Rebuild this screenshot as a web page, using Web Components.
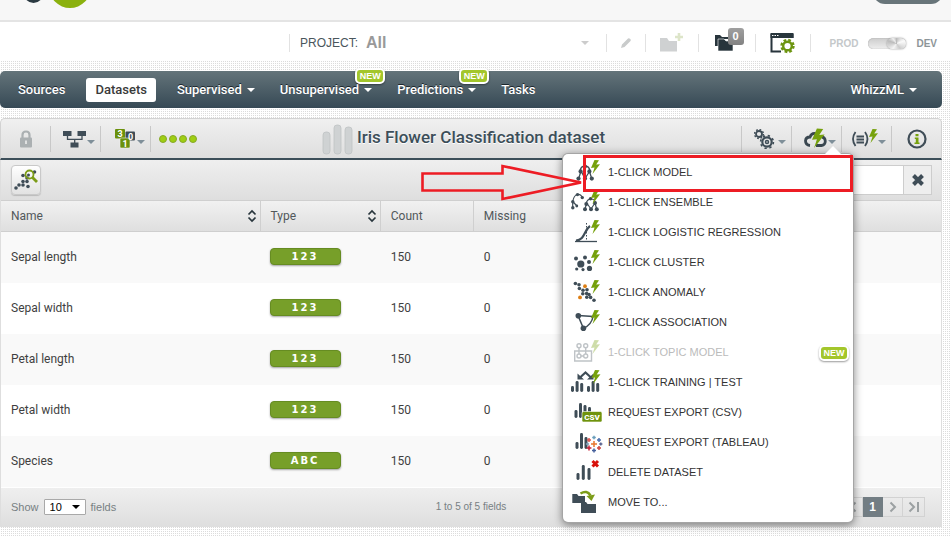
<!DOCTYPE html>
<html lang="en">
<head>
<meta charset="utf-8">
<title>Iris Flower Classification dataset</title>
<style>
body { margin: 0; background: #fff; color: #3c4648; font-family: Roboto, "Liberation Sans", sans-serif; font-size: 12px; }
</style>
</head>
<body>
<dataset-page></dataset-page>
<script>
const define = (name, html, setup) => {
  const template = document.createElement('template');
  template.innerHTML = html;
  customElements.define(name, class extends HTMLElement {
    constructor() {
      super();
      this.attachShadow({ mode: 'open' }).append(template.content.cloneNode(true));
    }
    connectedCallback() { if (setup) setup(this, this.shadowRoot); }
  });
};

const bolt = (x, y, s = 1) => `<path transform="translate(${x} ${y}) scale(${s})" fill="#76a10c" d="M3.5 0L8 .3 5.2 4.6 9 4.3 1.5 14 3.5 7.6 0 8z"/>`;
const dots = (list, r, fill = '#3f4d57') => list.map(([x, y, q]) => `<circle cx="${x}" cy="${y}" r="${q || r}" fill="${fill}"/>`).join('');
const bars = (list, fill = '#3f4d57') => list.map(([x, y, h]) => `<rect x="${x}" y="${y}" width="3" height="${h}" rx="1.4" fill="${fill}"/>`).join('');
const plus = (x, y, c, s = 2) => `<path d="M${x - s} ${y}h${2 * s}M${x} ${y - s}v${2 * s}" stroke="${c}" stroke-width="1.5"/>`;

/* name: [width, height, markup] */
const ICONS = {
  model: [30, 26, `<path d="M9 12.500Q9.500 7 14 7T19 12.500M10 12L7.700 19.500M10 12L14 19.500M18.500 12.500L14 19.500M18.500 12.500L20.700 19.500" fill="none" stroke="#3f4d57" stroke-width="1.300"/>${dots([[14, 7.5, 2], [9.6, 12.4], [18.4, 12.4], [7.5, 19.6], [14, 19.6], [20.8, 19.6]], 2.1)}${bolt(20, 1)}`],
  ensemble: [30, 26, `<path d="M1.700 18.700V12.500Q3 6 6.500 5.500T11.500 9M1.700 12.500L6 17M15 15Q16 10 20 10T24.500 14M15.500 14.500L14 20M16 14.500L20 20M24 14L20 20M24 14L25.700 20" fill="none" stroke="#3f4d57" stroke-width="1.200"/>${dots([[1.8, 12.7], [1.8, 18.7], [5.8, 17, 1.4], [6.5, 5.6], [11.3, 8.6], [15.3, 15, 2], [24, 14, 2], [14, 20.2, 2], [20, 20.2, 2], [25.8, 20.2, 2], [19.5, 9.8]], 1.7)}${bolt(20, 1)}`],
  logistic: [30, 26, `<path d="M4 22.500H26" stroke="#3f4d57" stroke-width="1.300"/><path d="M15.500 4V22" stroke="#3f4d57" stroke-dasharray="1.500 1.500"/><path d="M5 21.500C14 21 13 11 19 7" fill="none" stroke="#3f4d57" stroke-width="2.200"/>${bolt(20, 1)}`],
  cluster: [30, 26, `${dots([[5, 9.5], [9.8, 15, 3.6], [14, 8.6], [18, 13, 2], [5.7, 20, 1.6], [12, 20.6, 1.6], [18.5, 19.4, 2.6]], 2)}${bolt(20, 1)}`],
  anomaly: [30, 26, `${dots([[4.4, 4.5], [8, 5.8], [8.4, 9.5], [12, 11.3], [11.8, 14.8], [15.6, 14.6], [16, 10.8], [15.8, 18.2], [19.6, 18.4], [23, 21.2], [18, 15.5]], 1.8)}${dots([[14, 7.2], [9, 18.4]], 1.9, '#dd7d12')}${bolt(20, 1)}`],
  association: [30, 26, `<path d="M7 6.500L22 7.500Q21 15 12.500 19.500Z" fill="none" stroke="#3f4d57" stroke-width="1.500"/>${dots([[7.3, 6.8], [12.4, 19.2]], 2.8)}${bolt(20, 1)}`],
  topic: [30, 26, `<g opacity=".33" fill="none" stroke="#3f4d57" stroke-width="1.400"><path d="M3.700 12H20.500V22H3.700ZM8 9V15M14.700 9V15M10 17H13"/><circle cx="8" cy="6.800" r="2"/><circle cx="14.700" cy="6.800" r="2"/><circle cx="8" cy="17" r="2"/><circle cx="14.700" cy="17" r="2"/></g><g opacity=".35">${bolt(20, 1)}</g>`],
  training: [30, 26, `${bars([[0, 17, 6], [4.6, 12, 11], [9.2, 14, 9], [16, 17, 6], [20.6, 12, 11], [25.2, 14, 9]])}<path d="M9 8.500L14.500 3.500L20 8.500" fill="none" stroke="#3f4d57" stroke-width="2.200"/><path d="M6.500 4.500V10.500H13ZM22.500 4.500V10.500H16Z" fill="#3f4d57"/>${bolt(20.5, 1)}`],
  csv: [32, 26, `${bars([[3.5, 11, 8], [8, 4, 15], [12.5, 6, 12], [17, 8, 8]])}<rect x="11" y="12.500" width="20" height="10.500" rx="1.500" fill="#6f930d" stroke="#fff" stroke-width=".600"/><text x="21" y="20.800" text-anchor="middle" font-family="Roboto" font-weight="900" font-size="8" fill="#fff">CSV</text>`],
  tableau: [32, 26, `${bars([[4.5, 13, 7], [9, 4, 16], [13.5, 8, 12]])}${plus(23, 15, '#e8762c', 3)}${plus(18, 11, '#d9534f')}${plus(28, 11, '#4b6fae')}${plus(18, 19, '#c72037', 2.4)}${plus(28, 19, '#d0443d')}${plus(23, 8.5, '#6a9dbb', 1.8)}${plus(23, 21.5, '#46609c', 2)}${plus(16.5, 15, '#82a0b8', 1.6)}${plus(29.8, 15, '#5b6591', 1.6)}`],
  trash: [30, 26, `${bars([[5.5, 14, 7], [10.8, 6, 15], [16.5, 9, 12]])}<path d="M21.500 2L27 7.500M27 2L21.500 7.500" stroke="#d8110b" stroke-width="3"/>`],
  move: [30, 26, `<path d="M1.300 5H6L7.500 7H14V14H1.300ZM10 13H15L16.500 15H25V24H10Z" fill="#3f4d57"/><path d="M9.500 4.500Q16 .500 19.500 6.500" fill="none" stroke="#7c9c18" stroke-width="2.500"/><path d="M15.500 7L24 5.500 20.500 12Z" fill="#7c9c18"/>`],
  pencil: [12, 12, `<path d="M1 11L2 7.500 8 1.500Q9 .800 10.300 2 11.300 3.200 10.500 4L4.500 10Z" fill="#c9cbcb"/>`],
  folderadd: [24, 20, `<path d="M0 5H7L9 8H17V18.500H0Z" fill="#cfd1d2"/><path d="M19 0V8M15 4H23" stroke="#dde5c9" stroke-width="2.600"/>`],
  folders: [20, 18, `<path d="M0 1H5L7 3H14V5H3V12H0Z" fill="#28353c"/><path d="M3 5H9L11 7H18V17H3Z" fill="#28353c" stroke="#fff" stroke-width=".600"/>`],
  windowgear: [26, 22, `<path d="M1.500 2V19.500H11M22.500 6V2" fill="none" stroke="#28353c" stroke-width="2"/><path d="M.500 1H23.500V6H.500Z" fill="#28353c"/><path d="M2 3.500H9" stroke="#fff" stroke-dasharray="1.500 1"/><circle cx="17.500" cy="14" r="5.800" fill="none" stroke="#6d9511" stroke-width="2.800" stroke-dasharray="2.600 1.960"/><circle cx="17.500" cy="14" r="4.300" fill="#fff" stroke="#6d9511" stroke-width="2.400"/>`],
  lock: [14, 18, `<path d="M3.500 8V5Q3.500 1.500 7 1.500T10.500 5V8" fill="none" stroke="#abb0b2" stroke-width="2.200"/><rect x="1" y="7.500" width="12" height="10" rx="1" fill="#abb0b2"/><path d="M7 10.500V14" stroke="#eee" stroke-width="1.600"/>`],
  tree: [24, 18, `<path d="M0 1H8.500V6H0ZM14.500 1H23V6H14.500ZM7.500 12.500H15.500V17.500H7.500Z" fill="#3f4d57"/><path d="M4.500 6V9.300H19V6M11.700 9V13" fill="none" stroke="#3f4d57" stroke-width="1.300"/>`],
  numbers: [22, 20, `<rect x="0" width="10" height="9.500" rx="1" fill="#6b910c"/><rect x="10.500" y="2.500" width="9.500" height="9" rx="1" fill="#3f4d57"/><rect x="5" y="9" width="10" height="10" rx="1" fill="#6b910c" stroke="#eee" stroke-width=".600"/><g font-family="Roboto" font-weight="700" font-size="9" fill="#fff" text-anchor="middle"><text x="5" y="8">3</text><text x="15.500" y="10.500">0</text><text x="10" y="17.500">1</text></g>`],
  titlebars: [32, 32, `<g fill="#cfd2d3" stroke="#bfc3c4" stroke-width=".800"><rect x="1" y="9" width="7" height="22" rx="3"/><rect x="12" y="2" width="7" height="29" rx="3"/><rect x="23" y="4" width="7" height="27" rx="3"/></g>`],
  gears: [24, 20, `<g fill="none" stroke="#3f4d57"><circle cx="5" cy="5" r="3" stroke-width="1.800"/><circle cx="5" cy="5" r="4.400" stroke-width="1.500" stroke-dasharray="1.700 1.750"/><circle cx="13" cy="13" r="4.700" stroke-width="2.200"/><circle cx="13" cy="13" r="6.400" stroke-width="1.600" stroke-dasharray="2.300 2.720"/><circle cx="13" cy="13" r="1.500" stroke-width="1.500"/></g>`],
  cloud: [24, 22, `<path d="M6 17.500Q1.500 17 1.500 12.800 1.800 9 6 9 7.500 4.500 12 5.500M12 17.500H17.500Q21.300 17 21.300 13 21 9.500 18 9" fill="none" stroke="#3a4750" stroke-width="2.800"/>${bolt(8, .5, 1.4)}`],
  script: [27, 22, `<g fill="none" stroke="#3f4d57" stroke-width="1.800"><path d="M4.500 4Q-.500 11 4.500 18M14 4Q19 11 14 18M5.500 8.500H13M5.500 11.500H13M5.500 14.500H13"/></g>${bolt(18, 1)}`],
  info: [22, 22, `<circle cx="11" cy="11" r="8.500" fill="none" stroke="#3f4d57" stroke-width="2.200"/><path d="M9.500 6H12.500V8.200H9.500ZM8.800 9.500H12.500V14.500H13.500V16H8.500V14.500H9.800V11H8.800Z" fill="#76a10c"/>`],
  scatter: [26, 24, `${dots([[3, 20], [6, 17], [10, 17], [10, 13.5], [14, 13.5], [15, 18.5], [10, 7.5], [21.5, 4], [14, 10], [15.5, 7, 1.5]], 1.8)}<circle cx="16.500" cy="6.500" r="4" fill="none" stroke="#7c9c18" stroke-width="1.800"/><path d="M19.500 9.500L24 14" stroke="#7c9c18" stroke-width="2.800"/>`],
  sort: [10, 14, `<path d="M1.500 5.500L5 2 8.500 5.500M1.500 8.500L5 12 8.500 8.500" fill="none" stroke="#28353c" stroke-width="1.700"/>`],
  cross: [12, 12, `<path d="M1.500 1.500L10.500 10.500M10.500 1.500L1.500 10.500" stroke="#3f4d57" stroke-width="4"/>`],
  prev: [8, 12, `<path d="M6.500 1.500L2 6 6.500 10.500" fill="none" stroke="#9ba0a2" stroke-width="2"/>`],
  first: [12, 12, `<path d="M10 1.500L5.500 6 10 10.500M1.500 1V11" fill="none" stroke="#9ba0a2" stroke-width="2"/>`],
  next: [8, 12, `<path d="M1.500 1.500L6 6 1.500 10.500" fill="none" stroke="#9ba0a2" stroke-width="2"/>`],
  last: [12, 12, `<path d="M1.500 1.500L6 6 1.500 10.500M10 1V11" fill="none" stroke="#9ba0a2" stroke-width="2"/>`],
};

define('ui-icon', `<style>:host{display:inline-flex;flex:none}svg{display:block}</style><span></span>`, (el, root) => {
  const [w, h, body] = ICONS[el.getAttribute('name')];
  root.querySelector('span').innerHTML = `<svg width="${w}" height="${h}" viewBox="0 0 ${w} ${h}" aria-hidden="true">${body}</svg>`;
});

define('drop-caret', `<style>:host{display:inline-block;flex:none;border:4px solid transparent;border-top:4px solid currentColor;border-bottom:0}</style>`);

define('new-badge', `<style>
:host{display:inline-block;box-sizing:border-box;width:30px;height:16px;border:2px solid #fff;border-radius:5px;background:#a3c62b;color:#fff;
font:bold 9px/12px "Liberation Sans",sans-serif;text-align:center;box-shadow:0 1px 2px rgba(0,0,0,.4)}</style>NEW`);

define('top-strip', `<style>
:host{display:flex;justify-content:space-between;height:20px;background:#f7f7f7;border-bottom:2px solid #e4e4e4;overflow:hidden}
svg{display:block;margin-left:20px}
button{width:70px;height:24px;margin:-20px 8px 0 0;border:0;border-radius:12px;background:#68757a}
</style>
<svg width="80" height="20" viewBox="0 0 80 20" aria-hidden="true"><circle cx="13.500" cy="-7" r="10" fill="#2b3a42"/><circle cx="50" cy="-13" r="21" fill="#8bb10e"/></svg>
<button aria-label="Account"></button>`);

define('bar-cell', `<style>:host{display:flex;align-items:center;justify-content:center;position:relative;height:18px;border-left:1px solid #e2e2e2;box-sizing:border-box}</style><slot></slot>`);

define('project-bar', `<style>
:host{display:flex;align-items:center;height:39px;padding-top:3px;padding-left:289px;box-sizing:border-box;background:#fff;font-family:"Liberation Sans",sans-serif}
button{border:0;background:none;padding:0;color:inherit;font:inherit;display:flex;align-items:center}
.project{flex:1;justify-content:stretch}
.project button{flex:1;padding:0 17px 0 10px;font-size:12px;color:#4a565c}
.project b{font-size:16px;color:#999;margin-left:8px}
.project drop-caret{margin-left:auto;color:#ccc}
.a{width:39px}.b{width:53px}.c{width:57px}.d{width:55px}
.mode{flex:none;padding:0 14px 0 19px;font-size:10px;font-weight:bold;color:#c4c8ca;gap:10px}
.mode span{color:#8d9598}
input{appearance:none;margin:0;width:38px;height:11px;border-radius:6px;background:linear-gradient(#ccc,#eee);position:relative;box-shadow:inset 0 0 1px #888}
input::after{content:"";position:absolute;right:0;top:0;width:19px;height:11px;border-radius:6px;background:conic-gradient(#bbb,#fafafa 20%,#ccc 40%,#f5f5f5 60%,#bbb 80%,#eee,#bbb);box-shadow:0 0 2px #888}
.count{position:absolute;left:29px;top:-6px;width:16px;height:17px;border-radius:3px;background:linear-gradient(#a0a0a0,#828282);color:#fff;font:bold 11px/17px "Liberation Sans",sans-serif;text-align:center}
.c button{margin-right:4px}
</style>
<bar-cell class="project"><button>PROJECT: <b>All</b><drop-caret></drop-caret></button></bar-cell>
<bar-cell class="a"><button aria-label="Edit project"><ui-icon name="pencil"></ui-icon></button></bar-cell>
<bar-cell class="b"><button aria-label="New project"><ui-icon name="folderadd"></ui-icon></button></bar-cell>
<bar-cell class="c"><button aria-label="Projects"><ui-icon name="folders"></ui-icon></button><span class="count">0</span></bar-cell>
<bar-cell class="d"><button aria-label="Settings"><ui-icon name="windowgear"></ui-icon></button></bar-cell>
<bar-cell class="mode">PROD<input type="checkbox" checked aria-label="Development mode"><span>DEV</span></bar-cell>`);

define('nav-item', `<style>
:host{display:flex;position:relative;align-items:center;align-self:stretch}
a{display:flex;align-items:center;gap:5px;padding:0 8px;height:24px;border-radius:3px;color:#fff;text-decoration:none;font:500 13px/24px Roboto,sans-serif;text-shadow:0 -1px 0 #1b262c}
:host([active]) a{padding:0 9px;background:#fff;color:#3a3a3a;text-shadow:none}
:host([menu]) a{padding-right:4px}
drop-caret{display:none}:host([menu]) drop-caret{display:block}
new-badge{display:none;position:absolute;right:-9px;top:-3px}:host([fresh]) new-badge{display:block}
</style><a href="#"><slot></slot><drop-caret></drop-caret></a><new-badge></new-badge>`);

define('main-nav', `<style>
nav{display:flex;gap:13px;height:37px;padding:0 21px 0 10px;border-radius:5px;background:linear-gradient(#64747a,#364955)}
.end{margin-left:auto}
</style><nav><nav-item>Sources</nav-item><nav-item active>Datasets</nav-item><nav-item menu>Supervised</nav-item><nav-item menu fresh>Unsupervised</nav-item><nav-item menu fresh>Predictions</nav-item><nav-item>Tasks</nav-item><nav-item class="end" menu>WhizzML</nav-item></nav>`);

define('tool-item', `<style>
:host{display:flex;position:relative;width:50px;height:26px;box-sizing:border-box;align-items:center;justify-content:center}
:host([menu]){justify-content:flex-end;padding-right:5px}
button{display:flex;align-items:center;border:0;padding:0;background:none}
drop-caret{display:none;color:#7f8f99;margin:7px 0 0 0}
:host([menu]) drop-caret{display:block}
</style><button><span></span><drop-caret></drop-caret></button><slot></slot>`, (el, root) => {
  const icon = document.createElement('ui-icon');
  icon.setAttribute('name', el.getAttribute('icon'));
  root.querySelector('span').replaceWith(icon);
  root.querySelector('button').setAttribute('aria-label', el.getAttribute('label'));
});

define('menu-item', `<style>
:host{display:block}
button{display:flex;align-items:center;width:100%;height:30px;border:0;padding:0 4px 0 8px;background:none;color:#333;font:11px/30px "Liberation Sans",sans-serif;text-align:left}
:host([off]) button{color:#bbb}
.icon{display:flex;width:32px;margin-right:5px}
slot[name=end]{display:block;margin-left:auto}
span.label{flex:1}
</style><button><span class="icon"></span><span class="label"><slot></slot></span><slot name="end"></slot></button>`, (el, root) => {
  const icon = document.createElement('ui-icon');
  icon.setAttribute('name', el.getAttribute('icon'));
  root.querySelector('.icon').append(icon);
  root.querySelector('button').disabled = el.hasAttribute('off');
});

define('action-menu', `<style>
:host{display:block;position:absolute;z-index:5;right:-12px;top:28px;width:290px;padding:3px 0 5px;box-sizing:border-box;background:#fff;border-radius:5px;box-shadow:0 0 0 1px #a5a5a5,0 2px 8px 1px rgba(0,0,0,.45)}
:host::before{content:"";position:absolute;right:12px;top:-8px;border:8px solid transparent;border-top:0;border-bottom-color:#fff}
.box{position:absolute;left:20px;right:0;top:1px;height:37px;box-sizing:border-box;border:3px solid #ed1c24;pointer-events:none}
.arrow{position:absolute;left:-143px;top:9px;pointer-events:none}
</style>
<menu-item icon="model">1-CLICK MODEL</menu-item>
<menu-item icon="ensemble">1-CLICK ENSEMBLE</menu-item>
<menu-item icon="logistic">1-CLICK LOGISTIC REGRESSION</menu-item>
<menu-item icon="cluster">1-CLICK CLUSTER</menu-item>
<menu-item icon="anomaly">1-CLICK ANOMALY</menu-item>
<menu-item icon="association">1-CLICK ASSOCIATION</menu-item>
<menu-item icon="topic" off>1-CLICK TOPIC MODEL<new-badge slot="end"></new-badge></menu-item>
<menu-item icon="training">1-CLICK TRAINING | TEST</menu-item>
<menu-item icon="csv">REQUEST EXPORT (CSV)</menu-item>
<menu-item icon="tableau">REQUEST EXPORT (TABLEAU)</menu-item>
<menu-item icon="trash">DELETE DATASET</menu-item>
<menu-item icon="move">MOVE TO...</menu-item>
<div class="box"></div>
<svg class="arrow" width="170" height="40" viewBox="0 0 170 40" aria-hidden="true"><path d="M2.500 10.500H82.500V3L161 19.500 82.500 36V27.500H2.500Z" fill="none" stroke="#ed1c24" stroke-width="2.600"/></svg>`);

define('dataset-toolbar', `<style>
:host{display:grid;grid-template-columns:1fr auto 1fr;align-items:center;height:42px;box-sizing:border-box;border:1px solid #d2d2d2;border-bottom:2px solid #3c4e59;border-radius:5px 5px 0 0;background:linear-gradient(#f0f0f0,#dedede)}
.side{display:flex;align-items:center}
.end{justify-content:flex-end}
.side tool-item{border-right:1px solid #c8c8c8}
.end tool-item{border-right:0;border-left:1px solid #c8c8c8}
.status{display:flex;gap:2px;padding-left:8px}
.status i{width:8px;height:8px;border-radius:50%;box-sizing:border-box;background:#9fce12;border:1px solid #86a829}
h1{display:flex;align-items:center;gap:3px;margin:0 15px 0 0;font:500 17px/24px Roboto,sans-serif;color:#3c4e59;text-shadow:0 1px 0 #fff;white-space:nowrap}
h1 span{margin-top:-4px}
</style>
<div class="side"><tool-item icon="lock" label="Privacy"></tool-item><tool-item icon="tree" label="Workflow" menu></tool-item><tool-item icon="numbers" label="Field types" menu></tool-item><div class="status"><i></i><i></i><i></i><i></i></div></div>
<h1><ui-icon name="titlebars"></ui-icon><span>Iris Flower Classification dataset</span></h1>
<div class="side end"><tool-item icon="gears" label="Configure" menu></tool-item><tool-item icon="cloud" label="1-click actions" menu><action-menu></action-menu></tool-item><tool-item icon="script" label="Scripts" menu></tool-item><tool-item icon="info" label="Information"></tool-item></div>`);

define('search-row', `<style>
:host{display:flex;align-items:center;justify-content:space-between;height:40px;padding:0 9px 0 10px;background:linear-gradient(#efefef,#dedede)}
button{display:flex;align-items:center;justify-content:center;padding:0;box-sizing:border-box}
.plot{width:30px;height:30px;border:1px solid #c9c9c9;border-radius:4px;background:linear-gradient(#fff,#e2e2e2);box-shadow:0 1px 1px #bbb}
.search{display:flex;height:30px;width:35%;border:1px solid #cdcdcd;box-sizing:border-box}
input{flex:1;min-width:0;border:0;border-right:1px solid #cdcdcd;background:#fff;padding:0 8px}
.search button{width:27px;border:0;background:#eee}
</style><button class="plot" aria-label="Scatterplot"><ui-icon name="scatter"></ui-icon></button>
<div class="search"><input type="text" aria-label="Search by name"><button aria-label="Clear search"><ui-icon name="cross"></ui-icon></button></div>`);

define('type-pill', `<style>:host{display:block;box-sizing:border-box;width:71px;height:17px;border:1px solid #668c22;border-radius:4px;background:#779f29;color:#fff;font:bold 10px/15px "DejaVu Sans","Open Sans",sans-serif;letter-spacing:2px;text-align:center;box-shadow:0 1px 2px rgba(0,0,0,.35)}</style><slot></slot>`);

define('fields-table', `<style>
:host{display:block}
table{width:100%;border-collapse:separate;border-spacing:0;table-layout:fixed}
th,td{box-sizing:border-box}
th{height:32px;padding:0 10px;border-top:1px solid #cfcfcf;border-bottom:1px solid #cfcfcf;border-left:1px solid #cfcfcf;background:linear-gradient(#f1f1f1,#dfdfdf);font:400 12px/16px Roboto,sans-serif;color:#51585b;text-align:left}
th:first-child,th:last-child{border-left:0}
th div{display:flex;justify-content:space-between;align-items:center;margin-right:-7px}
th button{display:flex;border:0;padding:0;background:none}
td{height:51px;padding:0 10px 2px;font:400 12px/16px Roboto,sans-serif;color:#3f3f3f}
td:not(:first-child){padding-left:11px}
td.type:not(:first-child){padding-left:10px}
tr:nth-child(odd) td{background:#f9f9f9}
tr:nth-child(even) td{background:#fff}
.n{width:27.500%}.t{width:12.800%}.c{width:9.900%}.m{width:12%}
</style>
<table><thead><tr><th class="n"><div>Name<button aria-label="Sort by name"><ui-icon name="sort"></ui-icon></button></div></th><th class="t"><div>Type<button aria-label="Sort by type"><ui-icon name="sort"></ui-icon></button></div></th><th class="c">Count</th><th class="m">Missing</th><th></th></tr></thead>
<tbody></tbody></table>`, (el, root) => {
  root.querySelector('tbody').innerHTML = [['Sepal length', '123'], ['Sepal width', '123'], ['Petal length', '123'], ['Petal width', '123'], ['Species', 'ABC']]
    .map(([name, type]) => `<tr><td>${name}</td><td class="type"><type-pill>${type}</type-pill></td><td>150</td><td>0</td><td></td></tr>`).join('');
});

define('table-footer', `<style>
:host{display:grid;grid-template-columns:1fr auto 1fr;align-items:center;height:37px;padding:0 16px 2px;border-top:1px solid #fff;background:linear-gradient(#efefef,#dedede);color:#778083;font:11px/16px "Liberation Sans",sans-serif}
label{display:flex;align-items:center;gap:5px;margin-left:-6px}
select{appearance:none;width:42px;height:16px;box-sizing:border-box;border:1px solid #a9a9a9;border-radius:1px;padding:0 5px;font:11px/14px "Liberation Sans",sans-serif;color:#000;background:#fff}
.pick{position:relative;display:flex}
.pick drop-caret{position:absolute;right:6px;top:6px;color:#000;pointer-events:none}
.range{font-size:10px}
.pager{display:flex;justify-content:flex-end}
.pager button{display:flex;align-items:center;justify-content:center;width:20px;height:20px;padding:0;box-sizing:border-box;border:1px solid #d2d2d2;border-left:0;background:none}
.pager .edge{width:22px}
.pager .on{background:#727d83;border-color:#727d83;color:#fff;font:bold 12px/18px "Liberation Sans",sans-serif}
</style>
<label>Show <span class="pick"><select><option>10</option></select><drop-caret></drop-caret></span> fields</label>
<span class="range">1 to 5 of 5 fields</span>
<div class="pager"><button class="edge" aria-label="First"><ui-icon name="first"></ui-icon></button><button aria-label="Previous"><ui-icon name="prev"></ui-icon></button><button class="on">1</button><button aria-label="Next"><ui-icon name="next"></ui-icon></button><button class="edge" aria-label="Last"><ui-icon name="last"></ui-icon></button></div>`);

define('dataset-page', `<style>
:host{display:block}
main{padding:10px 9px 10px 0;background:conic-gradient(#dcdcdc 25%,#fff 0) 0 0/2px 2px}
main-nav{display:block;margin-bottom:10px}
section{border:0 solid #dedede;border-width:0 1px}
</style>
<top-strip></top-strip><project-bar></project-bar>
<main><main-nav></main-nav><dataset-toolbar></dataset-toolbar><section><search-row></search-row><fields-table></fields-table><table-footer></table-footer></section></main>`);
</script>
</body>
</html>
